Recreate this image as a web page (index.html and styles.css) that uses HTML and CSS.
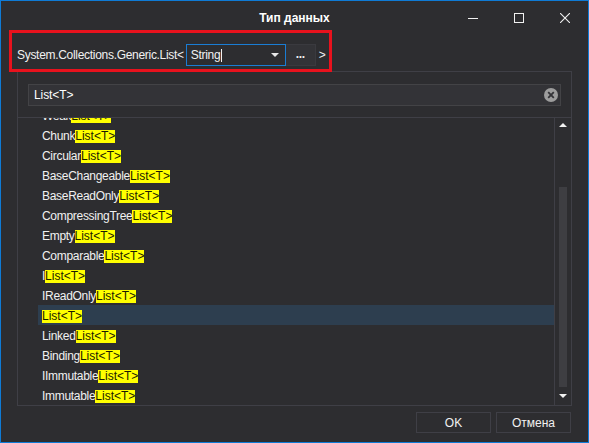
FILE: index.html
```html
<!DOCTYPE html>
<html lang="ru">
<head>
<meta charset="utf-8">
<title>Тип данных</title>
<link rel="stylesheet" href="styles.css">
</head>
<body>
<div class="window">
  <div class="titlebar">
    <div class="title">Тип данных</div>
    <div class="controls">
      <div class="ctrl"><svg width="10" height="10" viewBox="0 0 10 10"><path d="M0 5.5H10" stroke="#f1f1f1" stroke-width="1"/></svg></div>
      <div class="ctrl"><svg width="10" height="10" viewBox="0 0 10 10"><rect x="0.5" y="0.5" width="9" height="9" fill="none" stroke="#f1f1f1" stroke-width="1"/></svg></div>
      <div class="ctrl"><svg width="10" height="10" viewBox="0 0 10 10"><path d="M0 0L10 10M10 0L0 10" stroke="#f1f1f1" stroke-width="1.1"/></svg></div>
    </div>
  </div>
  <div class="content">
    <div class="type-row">
      <span class="type-label">System.Collections.Generic.List&lt;</span>
      <div class="combo">
        <span class="combo-text">String</span><span class="caret"></span>
        <span class="combo-arrow"></span>
      </div>
      <div class="dots-btn">...</div>
      <span class="type-close">&gt;</span>
    </div>
    <div class="panel">
      <div class="search-area">
        <div class="search-box">
          <span class="search-text">List&lt;T&gt;</span>
          <svg class="clear" width="14" height="14" viewBox="0 0 14 14"><circle cx="7" cy="7" r="7" fill="#9d9d9d"/><path d="M4.2 4.2L9.8 9.8M9.8 4.2L4.2 9.8" stroke="#333337" stroke-width="1.8"/></svg>
        </div>
      </div>
      <div class="list-wrap">
        <div class="viewport">
          <ul class="list">
            <li class="row"><span>Weak</span><mark>List&lt;T&gt;</mark></li>
            <li class="row"><span>Chunk</span><mark>List&lt;T&gt;</mark></li>
            <li class="row"><span>Circular</span><mark>List&lt;T&gt;</mark></li>
            <li class="row"><span>BaseChangeable</span><mark>List&lt;T&gt;</mark></li>
            <li class="row"><span>BaseReadOnly</span><mark>List&lt;T&gt;</mark></li>
            <li class="row"><span>CompressingTree</span><mark>List&lt;T&gt;</mark></li>
            <li class="row"><span>Empty</span><mark>List&lt;T&gt;</mark></li>
            <li class="row"><span>Comparable</span><mark>List&lt;T&gt;</mark></li>
            <li class="row"><span>I</span><mark>List&lt;T&gt;</mark></li>
            <li class="row"><span>IReadOnly</span><mark>List&lt;T&gt;</mark></li>
            <li class="row selected"><mark>List&lt;T&gt;</mark></li>
            <li class="row"><span>Linked</span><mark>List&lt;T&gt;</mark></li>
            <li class="row"><span>Binding</span><mark>List&lt;T&gt;</mark></li>
            <li class="row"><span>IImmutable</span><mark>List&lt;T&gt;</mark></li>
            <li class="row"><span>Immutable</span><mark>List&lt;T&gt;</mark></li>
          </ul>
        </div>
        <div class="scrollbar">
          <span class="arrow-up"></span>
          <span class="thumb"></span>
          <span class="arrow-down"></span>
        </div>
      </div>
    </div>
    <div class="buttons">
      <div class="btn">OK</div>
      <div class="btn">Отмена</div>
    </div>
  </div>
  <div class="annotation"></div>
</div>
</body>
</html>
```
FILE: styles.css
```css
* { box-sizing: border-box; }

body {
  margin: 0;
  background: #2d2d30;
  font-family: "Liberation Sans", Arial, sans-serif;
  font-size: 12px;
  color: #f1f1f1;
}

.window {
  position: relative;
  width: 589px;
  height: 443px;
  border: 1px solid #0f7bd6;
  background: #2d2d30;
  display: flex;
  flex-direction: column;
}

.titlebar {
  height: 30px;
  display: grid;
  grid-template-columns: 1fr auto 1fr;
  align-items: center;
}

.title {
  grid-column: 2;
  font-weight: bold;
  color: #ffffff;
  padding-top: 3px;
}

.controls {
  grid-column: 3;
  justify-self: end;
  display: flex;
}

.ctrl {
  width: 46px;
  height: 30px;
  display: flex;
  align-items: center;
  justify-content: center;
  padding-top: 3px;
}

.ctrl svg { display: block; }

.content {
  flex: 1;
  display: flex;
  flex-direction: column;
  padding: 13px 16px 0 16px;
}

.type-row {
  height: 22px;
  display: flex;
  align-items: center;
  letter-spacing: -0.3px;
}

.type-label {
  margin-right: 2px;
}

.combo {
  width: 100px;
  height: 22px;
  border: 1px solid #1a7dd4;
  display: flex;
  align-items: center;
  padding-left: 4px;
}

.caret {
  width: 1px;
  height: 13px;
  background: #f1f1f1;
  margin-left: 1px;
}

.combo-arrow {
  margin-left: auto;
  margin-right: 6px;
  width: 0;
  height: 0;
  border-left: 4px solid transparent;
  border-right: 4px solid transparent;
  border-top: 4px solid #e8e8e8;
}

.dots-btn {
  width: 30px;
  height: 22px;
  background: #333337;
  border: 1px solid #3a3a3f;
  border-left: none;
  display: flex;
  align-items: center;
  justify-content: center;
  line-height: 1;
  padding-bottom: 2px;
  font-weight: bold;
}

.type-close {
  margin-left: 3px;
}

.panel {
  margin-top: 5px;
  height: 335px;
  border: 1px solid #3f3f46;
  display: flex;
  flex-direction: column;
}

.search-area {
  padding: 12px 10px 11px 10px;
}

.search-box {
  height: 22px;
  background: #333337;
  border: 1px solid #434346;
  display: flex;
  align-items: center;
  padding: 0 2px 0 5px;
}

.search-text {
  color: #ffffff;
  letter-spacing: -0.1px;
}

.clear {
  margin-left: auto;
  display: block;
}

.list-wrap {
  flex: 1;
  border-top: 1px solid #3f3f46;
  display: flex;
  min-height: 0;
}

.viewport {
  flex: 1;
  overflow: hidden;
}

.list {
  list-style: none;
  margin: -13px 0 0 20px;
  padding: 0;
}

.row {
  height: 20px;
  padding: 5px 0 0 4px;
  line-height: 13px;
  display: flex;
  white-space: nowrap;
  letter-spacing: -0.3px;
}

.row.selected {
  background: #2d3e4f;
}

.row mark {
  background: #ffff00;
  color: #1b1b00;
  height: 13px;
  letter-spacing: 0;
}

.scrollbar {
  width: 17px;
  border-left: 1px solid #3f3f46;
  display: flex;
  flex-direction: column;
  align-items: center;
  padding-top: 5px;
}

.arrow-up {
  width: 0;
  height: 0;
  border-left: 4px solid transparent;
  border-right: 4px solid transparent;
  border-bottom: 4px solid #f1f1f1;
}

.thumb {
  margin-top: 60px;
  width: 8px;
  height: 200px;
  background: #3e3e42;
}

.arrow-down {
  margin-top: 7px;
  width: 0;
  height: 0;
  border-left: 4px solid transparent;
  border-right: 4px solid transparent;
  border-top: 4px solid #f1f1f1;
}

.buttons {
  margin-top: 6px;
  display: flex;
  justify-content: flex-end;
  gap: 5px;
  padding-right: 1px;
}

.btn {
  width: 75px;
  height: 21px;
  border: 1px solid #3f3f46;
  background: #2d2d30;
  display: flex;
  align-items: center;
  justify-content: center;
  color: #f1f1f1;
}

.annotation {
  position: absolute;
  left: 8px;
  top: 29px;
  width: 323px;
  height: 42px;
  border: 3px solid #e8121d;
  pointer-events: none;
}
```
